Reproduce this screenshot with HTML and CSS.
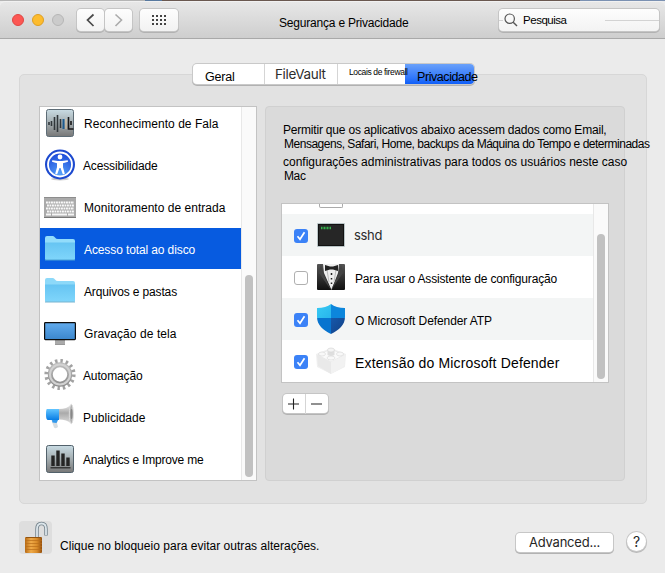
FILE: index.html
```html
<!DOCTYPE html>
<html lang="pt">
<head>
<meta charset="utf-8">
<title>Segurança e Privacidade</title>
<link rel="stylesheet" href="styles.css">
</head>
<body>
<div class="desktop-strip"></div>
<header class="titlebar">
  <div class="lights"><i class="light red"></i><i class="light yellow"></i><i class="light off"></i></div>
  <div class="nav">
    <button class="tool"><svg width="27" height="22" viewBox="0 0 27 22"><path d="M16.500 5.500 10.500 11l6 6" fill="none" stroke="#4a4a4a" stroke-width="1.700"/></svg></button>
    <button class="tool"><svg width="27" height="22" viewBox="0 0 27 22"><path d="M10.500 5.500 16.500 11l-6 6" fill="none" stroke="#ababab" stroke-width="1.600"/></svg></button>
  </div>
  <button class="tool grid"><svg width="38" height="22" viewBox="0 0 38 22"><path d="M12 7h14M12 11h14M12 15h14" stroke="#444" stroke-width="2" stroke-dasharray="2 2"/></svg></button>
  <h1 class="title">Segurança e Privacidade</h1>
  <div class="search">
    <i class="search-line short"></i>
    <svg width="14" height="14" viewBox="0 0 14 14"><circle cx="5.700" cy="5.700" r="4.700" fill="none" stroke="#555" stroke-width="1.200"/><path d="m9.200 9.200 3.800 3.800" stroke="#555" stroke-width="1.400"/></svg>
    <span class="search-text">Pesquisa</span><i class="search-line"></i>
  </div>
</header>

<main class="content">
  <nav class="tabs">
    <div class="tab t-general"><span>Geral</span></div>
    <div class="tab t-vault"><span>FileVault</span></div>
    <div class="tab t-firewall"><span>Locais de firewall</span></div>
    <div class="tab t-privacy"><span>Privacidade</span></div>
  </nav>

  <section class="panel">
    <div class="list">
      <ul class="rows">
        <li class="row">
          <svg class="icon" viewBox="0 0 32 32"><defs><linearGradient id="steel" x1="0" y1="0" x2="0" y2="1"><stop offset="0" stop-color="#c9dce4"/><stop offset=".5" stop-color="#a4adb0"/><stop offset="1" stop-color="#777"/></linearGradient></defs><rect x="2.500" y="2.500" width="27" height="27" rx="2" fill="url(#steel)" stroke="#5d6c76"/><path d="M5 15v3M7.500 14v5M10.500 10v13M13.500 8v17M16.500 12v9" stroke="#30363a" stroke-width="1.600"/><path d="M19.500 12v10" stroke="#1d5b8f" stroke-width="2"/><path d="M22 12v10" stroke="#e2c49b" stroke-width="1"/><path d="M24.500 10v12h5M27 14v4" fill="none" stroke="#181818" stroke-width="1.600"/></svg>
          <span class="label s1">Reconhecimento de Fala</span></li>
        <li class="row">
          <svg class="icon" viewBox="0 0 32 32"><defs><radialGradient id="blue" cx=".5" cy=".9" r=".9"><stop offset="0" stop-color="#55a2fa"/><stop offset="1" stop-color="#1a47d8"/></radialGradient></defs><ellipse cx="16" cy="30" rx="9" ry="1.500" fill="#ccc"/><circle cx="16" cy="15.500" r="15" fill="#1c49cf"/><circle cx="16" cy="15.500" r="12" fill="url(#blue)" stroke="#fff" stroke-width="1.800"/><circle cx="16" cy="8" r="2.400" fill="#fff"/><path d="M8.300 11.200 14 12h4l5.700-.8.3 1.600-5 1.500v4l1.800 6.500-1.900.6L16.500 19h-1l-2.400 6.400-1.900-.6 1.800-6.500v-4l-5-1.500z" fill="#fff"/></svg>
          <span class="label s2">Acessibilidade</span></li>
        <li class="row">
          <svg class="icon" viewBox="0 0 32 32"><rect x="0" y="6" width="32" height="20.500" fill="#aaa"/><path d="M0 6.500h32" stroke="#8d8d8d"/><path d="M0 26.500h32" stroke="#777"/><path d="M2 11.500h28M3 14.500h27M2 17.500h28M3 20.500h27" stroke="#fafafa" stroke-width="2" stroke-dasharray="1.900 .6"/><path d="M2 23.500h5M8 23.500h15M24 23.500h6" stroke="#f6f6f6" stroke-width="2"/></svg>
          <span class="label s3">Monitoramento de entrada</span></li>
        <li class="row selected">
          <svg class="icon" viewBox="0 0 32 32"><defs><linearGradient id="folder" x1="0" y1="0" x2="0" y2="1"><stop offset="0" stop-color="#66c4f2"/><stop offset="1" stop-color="#80d6fb"/></linearGradient></defs><path d="M1 7V5q0-2 2-2h6q1 0 2 1.500T14 6h15q2 0 2 2v3H1z" fill="#92dcfb"/><path d="M1 9.500h30V26q0 1-1 1H2q-1 0-1-1z" fill="url(#folder)"/><path d="M1 27h30" stroke="#4ba3d4"/></svg>
          <span class="label s4">Acesso total ao disco</span></li>
        <li class="row">
          <svg class="icon" viewBox="0 0 32 32"><path d="M1 7V5q0-2 2-2h6q1 0 2 1.500T14 6h15q2 0 2 2v3H1z" fill="#8dd9f9"/><path d="M1 9.500h30V26q0 1-1 1H2q-1 0-1-1z" fill="url(#folder)"/><path d="M1 27h30" stroke="#78b4cf"/></svg>
          <span class="label s5">Arquivos e pastas</span></li>
        <li class="row">
          <svg class="icon" viewBox="0 0 32 32"><defs><linearGradient id="screen" x1="0" y1="0" x2="0" y2="1"><stop offset="0" stop-color="#62acee"/><stop offset="1" stop-color="#3b86cc"/></linearGradient></defs><path d="M11 23h10v4H11z" fill="#aaa"/><path d="M11 27.500h10" stroke="#999"/><rect x=".600" y="5.600" width="30.800" height="17" rx=".8" fill="url(#screen)" stroke="#0c0c0c" stroke-width="1.200"/></svg>
          <span class="label s6">Gravação de tela</span></li>
        <li class="row">
          <svg class="icon" viewBox="0 0 32 32"><defs><linearGradient id="metal" x1="0" y1="0" x2="0" y2="1"><stop offset="0" stop-color="#bcbcbc"/><stop offset="1" stop-color="#8f8f8f"/></linearGradient></defs><circle cx="16" cy="15.500" r="13.600" fill="none" stroke="#a2a2a2" stroke-width="4" stroke-dasharray="2.400 2.941"/><circle cx="16" cy="15.500" r="9.700" fill="none" stroke="url(#metal)" stroke-width="5"/><circle cx="16" cy="15.500" r="10" fill="none" stroke="#d2d2d2" stroke-width="2"/></svg>
          <span class="label s7">Automação</span></li>
        <li class="row">
          <svg class="icon" viewBox="0 0 32 32"><defs><linearGradient id="horn" x1="0" y1="0" x2="0" y2="1"><stop offset="0" stop-color="#eee"/><stop offset=".45" stop-color="#aaa"/><stop offset="1" stop-color="#ddd"/></linearGradient><linearGradient id="hb" x1="0" y1="0" x2="0" y2="1"><stop offset="0" stop-color="#62c5ff"/><stop offset="1" stop-color="#087de5"/></linearGradient></defs><path d="M7 18h7l-1 4 1 4q-2 2-4 .500z" fill="#d5dce1"/><path d="M8 19h6l-1.500 3-4-.5z" fill="#3299ed"/><path d="M3 8h12v11H4q-2 0-2-5.500T3 8z" fill="url(#hb)"/><path d="M15 8q8 0 12-4.500v19Q23 18.500 15 18.500z" fill="url(#horn)"/><ellipse cx="27.300" cy="13" rx="2" ry="9.700" fill="#b1b1b1" stroke="#ddd"/><ellipse cx="27.500" cy="13" rx="1" ry="5" fill="#888"/></svg>
          <span class="label s8">Publicidade</span></li>
        <li class="row">
          <svg class="icon" viewBox="0 0 32 32"><rect x="2.500" y="2.500" width="27" height="27" rx="2" fill="url(#steel)" stroke="#52616b"/><path d="M9 12.500v10.500M14 7.500v15.500M19 10.500v12.500M24 14.500v8.500" stroke="#242424" stroke-width="3.400"/><path d="M6.500 24.800h20" stroke="#222" stroke-width="1.200"/></svg>
          <span class="label s9">Analytics e Improve me</span></li>
      </ul>
      <div class="track list-track"><i class="thumb"></i></div>
    </div>

    <div class="group">
      <p class="intro">
        <span class="line l1">Permitir que os aplicativos abaixo acessem dados como Email,</span>
        <span class="line l2">Mensagens, Safari, Home, backups da Máquina do Tempo e determinadas</span>
        <span class="line l3">configurações administrativas para todos os usuários neste caso</span>
        <span class="line l4">Mac</span>
      </p>
      <div class="table">
        <div class="apps">
          <div class="partial"><i class="cut"></i></div>
          <div class="app alt"><i class="check on"><svg viewBox="0 0 14 14"><path d="m3.500 7.300 2.500 3 4.500-7" fill="none" stroke="#fff" stroke-width="1.700"/></svg></i>
            <svg class="app-icon" viewBox="0 0 30 32"><rect x="1" y="4" width="28" height="24" rx="1" fill="#b9c4c6"/><rect x="2" y="5" width="26" height="22" fill="#111"/><rect x="3" y="6" width="24" height="20" fill="#262626"/><path d="M5 9h2.500M8 9h2.500M11 9h2M13.500 9h2" stroke="#35b44c" stroke-width="2.400" stroke-dasharray="1.500 .5"/></svg>
            <span class="a1">sshd</span></div>
          <div class="app"><i class="check"></i>
            <svg class="app-icon" viewBox="0 0 30 32"><defs><linearGradient id="suit" x1="0" y1="0" x2="0" y2="1"><stop offset="0" stop-color="#555"/><stop offset="1" stop-color="#101010"/></linearGradient></defs><rect x="1" y="3" width="28" height="26" rx="1" fill="url(#suit)"/><path d="M7 3h16l-1 9-6.500 17L8 12z" fill="#eee"/><path d="M11 9l2 12M20 9l-2 12" stroke="#bbb"/><path d="M5 3 7 12 15 29 3 12zM25 3l-2 9-8 17 12-17z" fill="#444"/><path d="m9 4 5 1.500h3L22 4v6l-5-1.500h-3L9 10z" fill="#222"/><path d="M15.500 12v2M15.500 17v1.500M15.500 21.500v1.500" stroke="#222" stroke-width="1.500"/></svg>
            <span class="a2">Para usar o Assistente de configuração</span></div>
          <div class="app alt"><i class="check on"><svg viewBox="0 0 14 14"><path d="m3.500 7.300 2.500 3 4.500-7" fill="none" stroke="#fff" stroke-width="1.700"/></svg></i>
            <svg class="app-icon" viewBox="0 0 30 32"><defs><clipPath id="shield"><path d="M15 1q5 4 14 4v9c0 8-6 13-14 17C7 27 1 22 1 14V5q9 0 14-4z"/></clipPath><linearGradient id="q1" x1="0" y1="0" x2="1" y2="1"><stop offset="0" stop-color="#39cdf5"/><stop offset="1" stop-color="#28b5ec"/></linearGradient><linearGradient id="q4" x1="0" y1="0" x2="1" y2="1"><stop offset="0" stop-color="#1658ab"/><stop offset="1" stop-color="#123f82"/></linearGradient></defs><g clip-path="url(#shield)"><path d="M0 0h15v15H0z" fill="url(#q1)"/><path d="M15 0h15v15H15z" fill="#0c86dc"/><path d="M0 15h15v17H0z" fill="#0874cf"/><path d="M15 15h15v17H15z" fill="url(#q4)"/></g></svg>
            <span class="a3">O Microsoft Defender ATP</span></div>
          <div class="app"><i class="check on"><svg viewBox="0 0 14 14"><path d="m3.500 7.300 2.500 3 4.500-7" fill="none" stroke="#fff" stroke-width="1.700"/></svg></i>
            <svg class="app-icon" viewBox="0 0 30 32"><path d="m15 3 15 6-1 13-14 7L1 22 0 9z" fill="#f0f0f0"/><path d="m15 4 13 6-13 7-13-7z" fill="#fafafa" stroke="#e6e6e6" stroke-width=".7"/><path d="m1 10 14 7v12L2 21z" fill="#e9e9e9"/><path d="m15 17 14-7-1 11-13 8z" fill="#f2f2f2"/><path d="M11.500 5v5q3.500 2 7 0V5z" fill="#dedede"/><ellipse cx="15" cy="5" rx="3.500" ry="2" fill="#f4f4f4" stroke="#d8d8d8" stroke-width=".7"/><ellipse cx="6" cy="9" rx="3.500" ry="2" fill="#f8f8f8" stroke="#ddd" stroke-width=".7"/><ellipse cx="24" cy="9" rx="3.500" ry="2" fill="#f8f8f8" stroke="#ddd" stroke-width=".7"/><ellipse cx="15" cy="13" rx="4" ry="2" fill="#f8f8f8" stroke="#ddd" stroke-width=".7"/></svg>
            <span class="a4">Extensão do Microsoft Defender</span></div>
        </div>
        <div class="track table-track"><i class="thumb"></i></div>
      </div>
      <div class="stepper">
        <svg viewBox="0 0 45 20"><path d="M5 10h11M10.500 4.500v11M28 10h11" stroke="#222" stroke-width="1.100"/><path d="M22.500 0v20" stroke="#d5d5d5"/></svg>
      </div>
    </div>
  </section>

  <footer class="footer">
    <div class="lock"><svg width="33" height="33" viewBox="0 0 33 33"><defs><linearGradient id="brass" x1="0" y1="0" x2="1" y2="0"><stop offset="0" stop-color="#b66a16"/><stop offset=".35" stop-color="#efaa48"/><stop offset=".7" stop-color="#d98b29"/><stop offset="1" stop-color="#96500c"/></linearGradient></defs><path d="M18 17V8q0-5.500 4.500-5.500T27 8v6.500" fill="none" stroke="#71808a" stroke-width="3.400"/><path d="M18 17V8q0-5.500 4.500-5.500T27 8v6" fill="none" stroke="#dce5ea" stroke-width="1.800"/><rect x="6" y="16" width="17" height="16" rx="1" fill="url(#brass)"/><path d="M6 19.500h17M6 22.500h17M6 25.500h17M6 28.500h17" stroke="#b96d18" stroke-width=".7"/><path d="M7 16.500h15" stroke="#935410"/></svg></div>
    <span class="lock-text">Clique no bloqueio para evitar outras alterações.</span>
    <button class="advanced">Advanced...</button>
    <button class="help">?</button>
  </footer>
</main>
</body>
</html>
```
FILE: styles.css
```css
* { box-sizing: border-box; }
body {
  margin: 0;
  width: 665px;
  height: 573px;
  overflow: hidden;
  background: #ebebeb;
  color: #000;
  font: 12px/14px "Liberation Sans", Arial, sans-serif;
}
button { padding: 0; margin: 0; font: inherit; color: inherit; }
svg { display: block; flex: none; }
span { white-space: nowrap; }

.desktop-strip {
  height: 1px;
  background: linear-gradient(90deg, #b5b5b5 0 145px, #58799f 145px 162px, #6a5850 162px 580px, #7b91b2 580px);
}
.titlebar {
  display: flex;
  align-items: flex-start;
  height: 38px;
  padding: 8px 6px 0 12px;
  background: linear-gradient(#e7e7e7, #cecece);
  border-top: 1px solid #f1f1f1;
  border-bottom: 1px solid #a9a9a9;
  border-radius: 5px 5px 0 0;
}
.lights { display: flex; gap: 8px; padding-top: 4px; }
.light { width: 12px; height: 12px; border-radius: 50%; border: 1px solid; }
.red { background: #fc5753; border-color: #df4744; }
.yellow { background: #fdbc2e; border-color: #de9f23; }
.off { background: #cbcbcb; border-color: #b6b6b6; }
.nav { display: flex; gap: 1px; margin: -1px 0 0 13px; }
.tool {
  height: 22px;
  border: 0;
  border-radius: 4px;
  background: linear-gradient(#fdfdfd, #f2f2f2);
  box-shadow: 0 0 0 1px #c5c5c5, 0 1px 0 1px #b2b2b2;
}
.grid { margin: -1px 0 0 8px; }
.title {
  width: 220px;
  margin: 6px 0 0 101px;
  font-size: 12px;
  line-height: 14px;
  font-weight: 400;
  letter-spacing: -0.2px;
}
.search {
  display: flex;
  align-items: center;
  width: 160px;
  height: 22px;
  margin-top: -1px;
  border-radius: 4px;
  background: linear-gradient(#fdfdfd, #f3f3f3);
  box-shadow: 0 0 0 1px #c5c5c5, 0 1px 0 1px #b2b2b2;
}
.search-text { margin-left: 5px; font-size: 11.5px; letter-spacing: -0.47px; }
.search-line { width: 54px; height: 1px; margin-left: auto; background: #d3d3d3; }
.short { width: 4px; margin: 0 1px 0 0; }

.content { padding: 25px 18px 0 19px; }
.tabs {
  position: relative;
  display: flex;
  width: 281px;
  height: 20px;
  margin-left: 174px;
  border-radius: 4px;
  background: #fff;
  box-shadow: 0 0 0 1px #c9c9c9, 0 1px 0 1px #b1b1b1;
}
.tab { height: 20px; border-right: 1px solid #d5d5d5; }
.t-general { width: 72px; padding: 6px 0 0 12px; font-size: 12.5px; letter-spacing: -0.2px; }
.t-vault { width: 73px; padding: 3px 0 0 10px; font: 13.5px/14px Inter, sans-serif; letter-spacing: -0.35px; color: #2d2d2d; }
.t-firewall { position: relative; z-index: 1; width: 67px; padding: 1px 0 0 11px; border: 0; font-size: 8.5px; letter-spacing: -0.37px; }
.t-privacy {
  width: 69px;
  padding: 6px 0 0 12px;
  border: 0;
  border-radius: 0 4px 4px 0;
  background: linear-gradient(#6aa1fa, #2f76fa 70%, #0f5ef8);
  font-size: 12.5px;
  letter-spacing: -0.43px;
}

.panel {
  display: flex;
  gap: 8px;
  height: 430px;
  margin-top: -10px;
  padding: 31px 21px 0 19px;
  border: 1px solid #d7d7d7;
  border-radius: 5px;
  background: #e2e2e2;
}
.list {
  display: flex;
  width: 218px;
  height: 375px;
  overflow: hidden;
  border: 1px solid #c3c3c3;
  background: #fff;
}
.rows { width: 201px; margin: -5px 0 0; padding: 0; list-style: none; }
.row { display: flex; align-items: center; gap: 8px; height: 42px; padding-left: 4px; }
.icon { width: 32px; height: 32px; }
.label { padding-top: 2px; }
.selected { height: 41px; margin-bottom: 1px; background: #075be0; color: #fff; }
.s1 { letter-spacing: 0.05px; }
.s2 { letter-spacing: -0.16px; margin-left: -1px; }
.s3 { letter-spacing: 0.03px; }
.s4 { letter-spacing: -0.11px; }
.s5 { letter-spacing: -0.14px; }
.s6 { letter-spacing: 0.07px; }
.s7 { letter-spacing: -0.13px; margin-left: -1px; }
.s8 { letter-spacing: 0.04px; margin-left: -1px; }
.s9 { letter-spacing: -0.19px; margin-left: -1px; }
.track { width: 15px; background: #fafafa; border-left: 1px solid #e8e8e8; }
.thumb { display: block; width: 8px; border-radius: 4px; background: #c1c1c1; }
.list-track .thumb { height: 202px; margin: 168px 0 0 3px; }

.group {
  width: 360px;
  height: 375px;
  padding: 16px 0 0 16px;
  border: 1px solid #d0d0d0;
  border-radius: 4px;
  background: #dadada;
}
.intro { display: flex; flex-direction: column; height: 80px; margin: 0; }
.line { height: 14px; }
.l1 { margin-left: 1px; letter-spacing: -0.2px; }
.l2 { margin-left: 2px; letter-spacing: -0.485px; }
.l3 { margin: 4px 0 0 1px; }
.l4 { margin-left: 2px; letter-spacing: -0.39px; }
.table {
  display: flex;
  width: 328px;
  height: 180px;
  margin-left: -1px;
  overflow: hidden;
  border: 1px solid #c3c3c3;
  background: #fff;
}
.apps { width: 311px; }
.partial { height: 10px; }
.cut { display: block; width: 24px; height: 4px; margin-left: 37px; border: 1px solid #aaa; border-top: 0; border-radius: 0 0 2px 2px; }
.app { display: flex; align-items: center; height: 42px; padding-left: 12px; }
.alt { background: #f3f5f5; }
.check { width: 14px; height: 14px; margin-top: 1px; border: 1px solid #b0b0b0; border-radius: 3px; background: #fff; }
.on { border: 0; background: #3b82f7; }
.app-icon { width: 30px; height: 32px; margin: -1px 8px 0 8px; }
.a1 { margin-top: -1px; font: 13px/14px Inter, sans-serif; letter-spacing: -0.34px; color: #2b2b2b; }
.a2 { margin-top: 4px; margin-left: 1px; letter-spacing: -0.18px; }
.a3 { margin-top: 4px; margin-left: 1px; letter-spacing: -0.09px; }
.a4 { margin-top: 4px; margin-left: 1px; font-size: 14px; letter-spacing: 0.15px; }
.table-track .thumb { height: 145px; margin: 30px 0 0 3px; }
.stepper {
  width: 45px;
  height: 19px;
  margin: 11px 0 0 1px;
  border-radius: 4px;
  background: #fff;
  box-shadow: 0 0 0 1px #c5c5c5, 0 1px 0 1px #b2b2b2;
}

.footer { display: flex; align-items: flex-start; padding-top: 17px; }
.lock { width: 33px; height: 33px; border-radius: 4px; background: #dedede; }
.lock-text { margin: 18px 0 0 8px; letter-spacing: 0.027px; }
.advanced {
  width: 97px;
  height: 19px;
  margin: 12px 14px 0 auto;
  border: 0;
  border-radius: 4px;
  background: #fff;
  box-shadow: 0 0 0 1px #c7c7c7, 0 1px 0 1px #b2b2b2;
  color: #262626;
  font: 13px/19px Inter, sans-serif;
  letter-spacing: -0.22px;
}
.help {
  width: 19px;
  height: 19px;
  margin-top: 11px;
  margin-right: 1px;
  border: 0;
  border-radius: 50%;
  background: #fff;
  box-shadow: 0 0 0 1px #c7c7c7, 0 1px 0 1px #b9b9b9;
  color: #262626;
  font: 14px/19px Inter, sans-serif;
}
```
